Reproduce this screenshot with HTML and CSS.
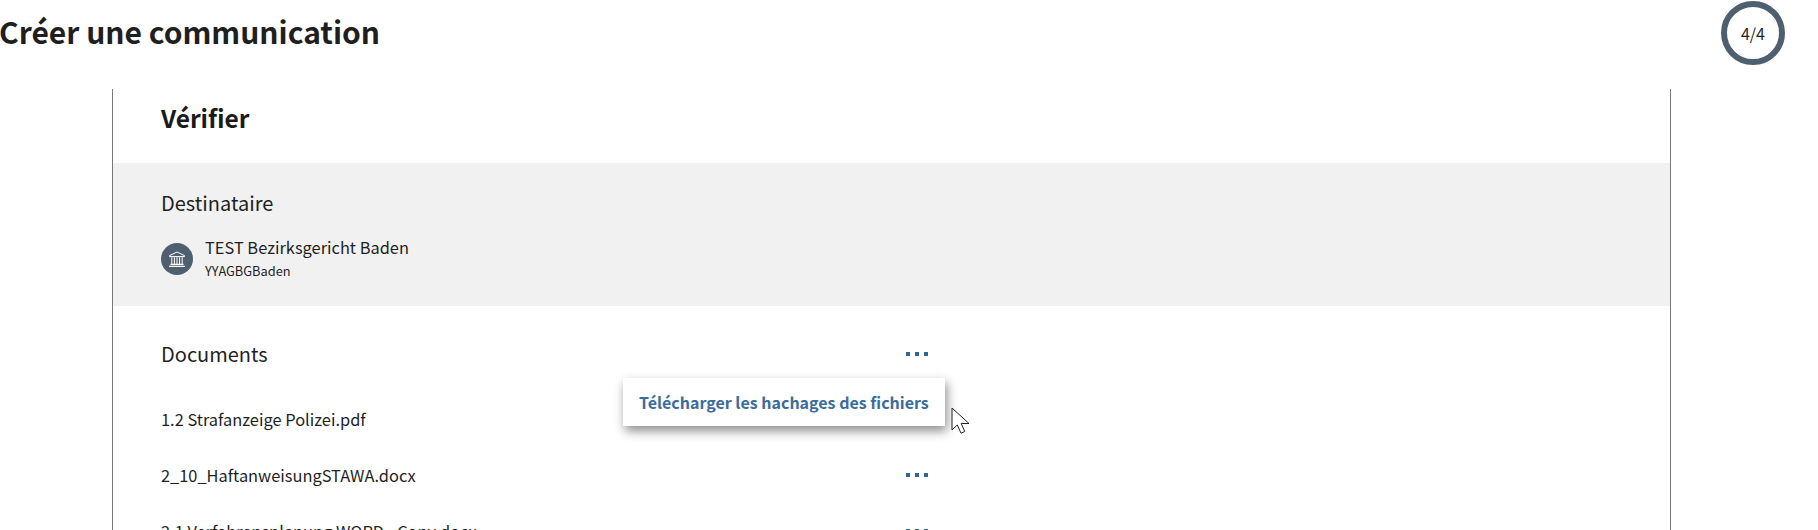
FILE: index.html
```html
<!DOCTYPE html>
<html lang="fr">
<head>
    <meta charset="UTF-8">
    <meta name="viewport" content="width=device-width, initial-scale=1.0">
    <title>Créer une communication</title>
    <link rel="stylesheet" href="styles.css">
</head>
<body>
    <header class="page-header">
        <h1 class="page-title">Créer une communication</h1>
        <div class="step-ring">4/4</div>
    </header>

    <main class="card">
        <h2 class="card-title">Vérifier</h2>

        <section class="recipient">
            <h3 class="section-title">Destinataire</h3>
            <div class="recipient-row">
                <span class="recipient-icon">
                    <svg width="20" height="20" viewBox="0 0 20 20" fill="none" stroke="#fff" stroke-width="1">
                        <path d="M2.5 6.6 10 3l7.5 3.6v1h-15z"/>
                        <path d="M4.8 8.2v7M7.4 8.2v7M10 8.2v7M12.6 8.2v7M15.2 8.2v7"/>
                        <path d="M3.5 15.4h13M2 17.3h16" stroke-width="1.2"/>
                    </svg>
                </span>
                <div>
                    <div class="recipient-name">TEST Bezirksgericht Baden</div>
                    <div class="recipient-code">YYAGBGBaden</div>
                </div>
            </div>
        </section>

        <section class="documents">
            <div class="doc-head">
                <h3 class="section-title">Documents</h3>
                <span class="dots"><i></i><i></i><i></i></span>
                <div class="menu">Télécharger les hachages des fichiers</div>
                <svg class="cursor" width="19" height="28" viewBox="0 0 19 28">
                    <path d="M1 1v22l5.3-5 3.7 8.2 3.8-1.7-3.6-8H18z" fill="#fff" stroke="#222" stroke-width="1"/>
                </svg>
            </div>
            <div class="doc-row"><span>1.2 Strafanzeige Polizei.pdf</span></div>
            <div class="doc-row"><span>2_10_HaftanweisungSTAWA.docx</span><span class="dots"><i></i><i></i><i></i></span></div>
            <div class="doc-row"><span>2.1 Verfahrensplanung WORD - Copy.docx</span><span class="dots"><i></i><i></i><i></i></span></div>
        </section>
    </main>
</body>
</html>
```

FILE: styles.css
```css
html, body {
    height: 530px;
    overflow: hidden;
}
body {
    margin: 0;
    background-color: #fff;
    color: #1f1f1f;
    font-family: "Noto Sans CJK SC", "Noto Sans", sans-serif;
}
h1, h2, h3 {
    margin: 0;
}
.page-header {
    display: flex;
    justify-content: space-between;
    align-items: center;
    height: 89px;
    padding: 0 33px 23px 0;
    box-sizing: border-box;
}
.page-title {
    font-size: 30px;
    font-weight: 700;
    line-height: 40px;
    margin: -5px 0 0 -1px;
}
.step-ring {
    width: 64px;
    height: 64px;
    box-sizing: border-box;
    border: 6px solid #4e6070;
    border-radius: 50%;
    display: flex;
    justify-content: center;
    align-items: center;
    font-size: 16px;
}
.card {
    margin: 0 147px 0 112px;
    border-left: 1px solid #777;
    border-right: 1px solid #777;
}
.card-title {
    font-size: 24.5px;
    font-weight: 700;
    line-height: 34px;
    padding: 12px 48px 28px;
    color: #1a1a1a;
}
.recipient {
    background-color: #f1f1f1;
    height: 143px;
    padding: 27px 48px 0;
    box-sizing: border-box;
}
.section-title {
    font-size: 20px;
    font-weight: 400;
    line-height: 26px;
}
.recipient-row {
    display: flex;
    align-items: center;
    gap: 12px;
    margin-top: 20px;
}
.recipient-icon {
    width: 32px;
    height: 32px;
    border-radius: 50%;
    background-color: #4e6070;
    display: flex;
    justify-content: center;
    align-items: center;
}
.recipient-name {
    font-size: 16.4px;
    line-height: 23px;
}
.recipient-code {
    font-size: 12.8px;
    line-height: 20px;
    margin-top: 2px;
}
.documents {
    padding: 35px 48px 0;
}
.doc-head {
    display: flex;
    justify-content: space-between;
    align-items: center;
    width: 767px;
    height: 26px;
    position: relative;
}
.doc-row {
    display: flex;
    justify-content: space-between;
    align-items: center;
    width: 767px;
    height: 56px;
    font-size: 16.4px;
}
.doc-head + .doc-row {
    margin-top: 24px;
}
.dots {
    display: flex;
    gap: 5px;
}
.dots i {
    width: 4px;
    height: 4px;
    background-color: #2f6696;
}
.menu {
    position: absolute;
    top: 37px;
    right: -17px;
    width: 322px;
    height: 48px;
    box-sizing: border-box;
    padding-left: 16px;
    display: flex;
    align-items: center;
    background-color: #fff;
    box-shadow: 2px 5px 10px rgba(0, 0, 0, 0.45);
    color: #3a6d9c;
    font-size: 16px;
    font-weight: 700;
}
.cursor {
    position: absolute;
    top: 66px;
    right: -42px;
}
```
